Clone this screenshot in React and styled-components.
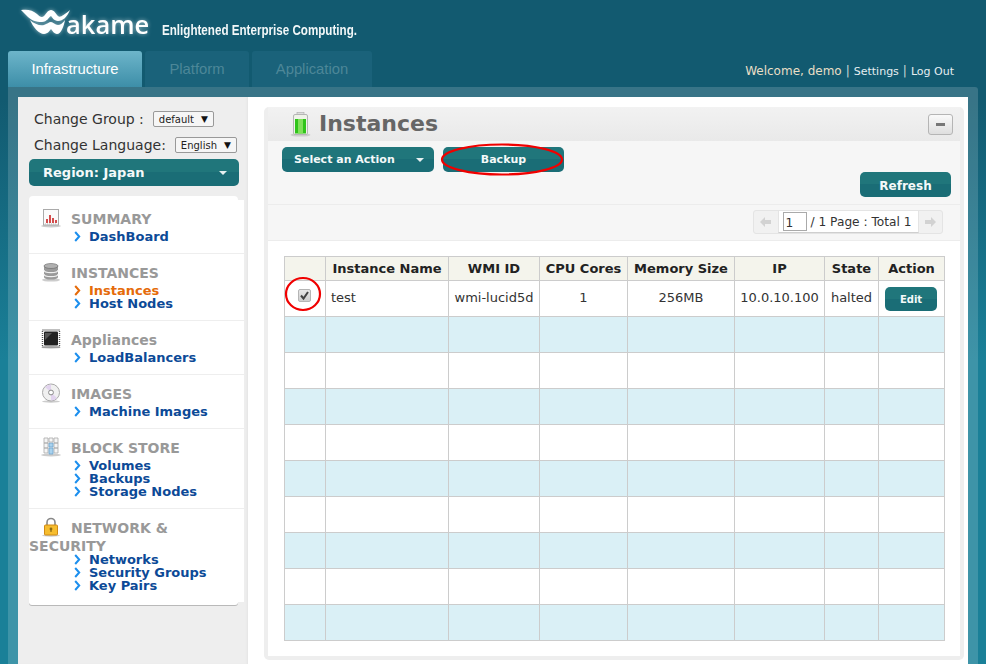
import React from 'react'
import styled, { createGlobalStyle } from 'styled-components'

const GlobalStyle = createGlobalStyle`
  html, body { margin: 0; padding: 0; }
  body {
    height: 664px;
    overflow: hidden;
    font-family: "DejaVu Sans", sans-serif;
    background: linear-gradient(#125a70 0, #125a70 100px, #1a8098 360px, #1a8098 100%);
  }
`

const Header = styled.header`
  height: 87px;
  position: relative;
  display: flex;
  flex-direction: column;
  justify-content: space-between;
`

const BrandName = styled.span`
  font-family: "Open Sans", sans-serif;
  font-weight: 600;
  font-size: 25.5px;
  line-height: 30px;
  margin: 0 0 0 -7px;
`

const Brand = styled.div`
  display: flex;
  align-items: flex-start;
  padding: 9px 0 0 21px;
  color: #fff;

  svg, ${BrandName} {
    filter: drop-shadow(0 0 2px rgba(255, 255, 255, .55));
  }
`

const Tagline = styled.span`
  font-family: "Liberation Sans", sans-serif;
  font-weight: 700;
  font-size: 14px;
  line-height: 16px;
  color: #f2f7f8;
  margin: 13px 0 0 13px;
  transform: scaleX(.83);
  transform-origin: left;
  white-space: nowrap;
`

const NavRow = styled.div`
  display: flex;
  align-items: flex-end;
  justify-content: space-between;
  padding: 0 32px 0 8px;
`

const Tabs = styled.nav`
  display: flex;
  gap: 3px;
`

const Tab = styled.a`
  width: ${p => p.$w}px;
  height: 36px;
  line-height: 36px;
  text-align: center;
  font-family: "Liberation Sans", sans-serif;
  font-size: 14.8px;
  border-radius: 3px 3px 0 0;
  color: ${p => p.$active ? '#fff' : '#4d8798'};
  background: ${p => p.$active ? 'linear-gradient(#6db5ca, #3d8ea8)' : '#1a627a'};
`

const UserNav = styled.div`
  padding-bottom: 9px;
  font-size: 12px;
  color: #e9dfc6;
  white-space: nowrap;
`

const UserLink = styled.span`
  font-size: 11px;
  color: #e6eef0;
`

const Sep = styled.span`
  margin: 0 4px;
  color: #cfd8d8;
`

const Shell = styled.div`
  margin: 0 8px;
  height: 577px;
  box-sizing: border-box;
  padding: 10px 10px 0;
  display: flex;
  border-radius: 0 3px 0 0;
  background: rgba(255, 255, 255, .16);
`

const Sidebar = styled.aside`
  width: 230px;
  flex: none;
  box-sizing: border-box;
  padding: 9px 0 0 11px;
  background: #eeeeee;
  box-shadow: inset -2px 0 2px -1px #e4e4e4;
`

const FieldRow = styled.div`
  height: 26px;
  display: flex;
  align-items: center;
  padding-left: 5px;
  font-size: 14px;
  color: #333;
  white-space: nowrap;
`

const FakeSelect = styled.span`
  box-sizing: border-box;
  width: ${p => p.$w}px;
  height: 16px;
  margin-left: ${p => p.$gap}px;
  padding: 0 5px;
  display: flex;
  align-items: center;
  justify-content: space-between;
  font-size: 10px;
  color: #222;
  background: #f6f6f6;
  border: 1px solid #999;
  border-radius: 2px;

  i {
    font-style: normal;
    font-size: 9px;
    color: #111;
  }
`

const Caret = styled.span`
  width: 0;
  height: 0;
  margin-right: -2px;
  border-left: 4px solid transparent;
  border-right: 4px solid transparent;
  border-top: 4px solid #e6f0f0;
`

const TealButton = styled.button`
  position: relative;
  box-sizing: border-box;
  width: ${p => p.$w}px;
  height: ${p => p.$h || 25}px;
  padding: 0 ${p => p.$pad || 0}px;
  display: flex;
  align-items: center;
  justify-content: ${p => p.$split ? 'space-between' : 'center'};
  font-family: "DejaVu Sans", sans-serif;
  font-weight: 700;
  font-size: ${p => p.$size || 11}px;
  color: #f4f9f9;
  border: 0;
  border-radius: 5px;
  background: linear-gradient(#20767b 0, #20767b 50%, #1a6d76 50%, #1a6d76 100%);
`

const RegionButton = styled(TealButton)`
  margin-top: 1px;
  white-space: nowrap;
`

const RefreshButton = styled(TealButton)`
  padding-top: 2px;
`

const Menu = styled.div`
  width: 215px;
  margin-top: 10px;
`

const MenuCap = styled.div`
  width: 209px;
  height: ${p => p.$bottom ? 3 : 4}px;
  background: #fff;
  border-radius: ${p => p.$bottom ? '0 0 5px 5px' : '5px 5px 0 0'};
  box-shadow: ${p => p.$bottom ? '0 1px 0 #b9b9b9' : 'none'};
`

const Section = styled.section`
  padding: 10px 0;
  background: #fff;
  border-top: ${p => p.$first ? 0 : 1}px solid #eeeeee;

  &::after {
    content: "";
    display: block;
    clear: both;
  }
`

const SectionIcon = styled.span`
  float: left;
  width: 42px;
  height: 18px;
  padding-left: 12px;
  box-sizing: border-box;

  svg {
    display: block;
    margin-top: -2px;
  }
`

const SectionTitle = styled.h3`
  margin: 0 0 ${p => p.$wrapped ? -2 : 2}px;
  font-size: 14px;
  line-height: 18px;
  font-weight: 700;
  color: #999;
`

const LinkRow = styled.a`
  display: flex;
  align-items: center;
  height: 13px;
  padding-left: 45px;
  font-size: 13px;
  line-height: 13px;
  font-weight: 700;
  color: ${p => p.$active ? '#e56b0a' : '#0c4a97'};

  svg {
    margin-right: 8px;
    flex: none;
  }
`

const Main = styled.main`
  flex: 1;
  min-width: 0;
  box-sizing: border-box;
  padding: 10px 4px 4px 16px;
  background: #fff;
`

const Panel = styled.div`
  height: 553px;
  box-sizing: border-box;
  padding: 0 4px 4px;
  background: #eeeeee;
  border-radius: 5px;
  display: flex;
  flex-direction: column;
`

const PanelHead = styled.div`
  height: 34px;
  flex: none;
  padding: 0 7px 0 22px;
  display: flex;
  align-items: center;
  background: linear-gradient(#f2f2f2, #e9e9e9);
`

const PanelTitle = styled.h2`
  flex: 1;
  margin: 0 0 0 8px;
  font-size: 22px;
  line-height: 32px;
  font-weight: 700;
  color: #666;
`

const Collapse = styled.button`
  width: 25px;
  height: 21px;
  padding: 0;
  display: flex;
  align-items: center;
  justify-content: center;
  background: linear-gradient(#fafafa, #dedede);
  border: 1px solid #b5b5b5;
  border-radius: 3px;

  &::before {
    content: "";
    width: 9px;
    height: 3px;
    background: #777;
  }
`

const Toolbar = styled.div`
  flex: none;
  padding: 6px 9px 7px 14px;
  background: #f6f6f6;
  border-bottom: 1px solid #ececec;
`

const ToolRow = styled.div`
  height: 25px;
  display: flex;
  gap: 9px;
  justify-content: ${p => p.$end ? 'flex-end' : 'flex-start'};
`

const Mark = styled.svg`
  position: absolute;
  left: ${p => p.$x}px;
  top: ${p => p.$y}px;
  pointer-events: none;
  overflow: visible;
`

const PagerBar = styled.div`
  height: 36px;
  flex: none;
  box-sizing: border-box;
  padding: 5px 17px 0 0;
  display: flex;
  justify-content: flex-end;
  background: #f6f6f6;
  border-bottom: 1px solid #ececec;
`

const Pager = styled.div`
  width: 190px;
  height: 24px;
  box-sizing: border-box;
  display: flex;
  align-items: stretch;
  background: #f1f1f1;
  border: 1px solid #e4e4e4;
  border-radius: 3px;
`

const PagerArrow = styled.span`
  flex: 1;
  display: flex;
  align-items: center;
  justify-content: center;
`

const PagerBody = styled.div`
  width: 141px;
  flex: none;
  box-sizing: border-box;
  display: flex;
  align-items: center;
  gap: 4px;
  padding-left: 4px;
  font-size: 12.2px;
  color: #333;
  white-space: nowrap;
  background: #fff;
  border-left: 1px solid #e4e4e4;
  border-right: 1px solid #e4e4e4;
  border-bottom: 1px solid #cfcfcf;
`

const PageInput = styled.span`
  box-sizing: border-box;
  width: 24px;
  height: 19px;
  line-height: 20px;
  padding-left: 2px;
  border: 1px solid #aaa;
  background: #fff;
`

const TableArea = styled.div`
  flex: 1;
  padding: 15px 16px;
  background: #fff;
`

const Grid = styled.table`
  width: 660px;
  table-layout: fixed;
  border-collapse: collapse;
  border: 1px solid #ccc;
  font-size: 13px;
  color: #333;
`

const Th = styled.th`
  box-sizing: border-box;
  width: ${p => p.$w}px;
  height: 24px;
  padding: 0;
  font-size: 13px;
  font-weight: 700;
  color: #222;
  white-space: nowrap;
  background: #f4f4ec;
  border: 1px solid #ccc;
`

const Tr = styled.tr`
  background: ${p => p.$alt ? '#daf0f6' : '#fff'};
`

const Td = styled.td`
  position: relative;
  height: 36px;
  padding: 0 ${p => p.$left ? 5 : 0}px 2px;
  text-align: ${p => p.$left ? 'left' : 'center'};
  white-space: nowrap;
  box-sizing: border-box;
  border: 1px solid #ccc;
`

const Check = styled.span`
  display: block;
  width: 11px;
  height: 11px;
  margin: -4px 0 0 13px;
  background: linear-gradient(#e8e8e8, #cfcfcf);
  border: 1px solid #b5b5b5;
  border-radius: 2px;

  svg {
    display: block;
  }
`

const EditButton = styled(TealButton)`
  margin: 3px 0 0 6px;
`

const ChartIcon = () => (
  <svg width="20" height="20" viewBox="0 0 20 20">
    <ellipse cx="10" cy="18" rx="10" ry="1.5" fill="#ccc" />
    <rect x="2.5" y="1.5" width="15" height="15.5" fill="#fbfbfb" stroke="#aaa" />
    <path d="M6 15V11M9 15V7M12 15V10M15 15V12" stroke="#cf3a3a" strokeWidth="1.8" />
    <path d="M4 16h12" stroke="#bbb" strokeDasharray="1 1" />
  </svg>
)

const DbIcon = () => (
  <svg width="20" height="20" viewBox="0 0 20 20">
    <ellipse cx="10" cy="18" rx="9" ry="1.6" fill="#ccc" />
    <path d="M3 4v11c0 1.5 3 2.6 7 2.6s7-1.1 7-2.6V4z" fill="#9a9a9a" />
    <ellipse cx="10" cy="4" rx="7" ry="2.5" fill="#b0b0b0" stroke="#666" strokeWidth=".6" />
    <path d="M3 8c0 1.5 3 2.6 7 2.6s7-1.1 7-2.6M3 12c0 1.5 3 2.6 7 2.6s7-1.1 7-2.6" fill="none" stroke="#efefef" strokeWidth="1.2" />
  </svg>
)

const ChipIcon = () => (
  <svg width="20" height="20" viewBox="0 0 20 20">
    <ellipse cx="10" cy="18.5" rx="10" ry="1.2" fill="#ccc" />
    <rect x="1.5" y="1" width="17" height="17" fill="none" stroke="#555" strokeDasharray="1 1" strokeWidth="1.4" />
    <rect x="3" y="2.5" width="14" height="14" rx="1" fill="#222" />
    <path d="M4 4h7l-7 7z" fill="#555" />
  </svg>
)

const DiscIcon = () => (
  <svg width="20" height="20" viewBox="0 0 20 20">
    <ellipse cx="10" cy="18.5" rx="9" ry="1.2" fill="#ccc" />
    <circle cx="10" cy="9.5" r="8.5" fill="#f0f0f0" stroke="#aaa" />
    <path d="M10 9.5L4 4a8 8 0 0 1 6-2.5zM10 9.5l6 5.5a8 8 0 0 1-6 2.5z" fill="#e2d4ee" />
    <circle cx="10" cy="9.5" r="2.4" fill="#fff" stroke="#888" />
  </svg>
)

const BlocksIcon = () => (
  <svg width="20" height="20" viewBox="0 0 20 20">
    <ellipse cx="10" cy="18" rx="10" ry="1.4" fill="#ccc" />
    <path d="M3 1h4v5H3zM3 6h4v5H3zM3 11h4v5H3zM13 1h4v5h-4zM13 6h4v5h-4zM13 11h4v5h-4z" fill="#f5f5f5" stroke="#aaa" strokeWidth=".8" />
    <path d="M8 6h4v4H8zM8 11h4v6H8z" fill="#a9d2ee" stroke="#6fa3cc" strokeWidth=".8" />
    <path d="M8 1h4v4H8z" fill="#f5f5f5" stroke="#aaa" strokeWidth=".8" />
  </svg>
)

const LockIcon = () => (
  <svg width="20" height="20" viewBox="0 0 20 20">
    <ellipse cx="10" cy="18.5" rx="9" ry="1.2" fill="#ccc" />
    <path d="M6 9V5.5a4 4 0 0 1 8 0V9" fill="none" stroke="#888" strokeWidth="1.6" />
    <rect x="3.5" y="8" width="13" height="10" rx="1" fill="#f6bd2f" stroke="#d08a15" />
    <circle cx="10" cy="12" r="1.4" fill="#8a6a15" />
    <path d="M10 12v3" stroke="#8a6a15" strokeWidth="1.2" />
  </svg>
)

const BatteryIcon = () => (
  <svg width="21" height="25" viewBox="0 0 21 25">
    <ellipse cx="10.5" cy="23" rx="10" ry="1.6" fill="#ccc" />
    <rect x="7" y="0.5" width="7" height="2.5" fill="#ddd" stroke="#aaa" strokeWidth=".6" />
    <rect x="3.5" y="2.5" width="14" height="20" rx="1.5" fill="#eef3e8" stroke="#b5b5b5" />
    <rect x="5" y="7" width="11" height="14.5" fill="#2fc41a" />
    <rect x="8" y="7" width="5" height="14.5" fill="#7fe05a" />
  </svg>
)

const WaveLogo = () => (
  <svg width="52" height="28" viewBox="0 0 52 28">
    <path
      d="M0 1C6 0 12 1 16 5C19 8 21 9 23 7C25 5 27 1 30 1C33 1 35 5 37 7C39 9 43 6 49 1C46 8 42 12 37 12C33 12 31 8 30 7C28 8 26 13 21 13C15 13 10 11 7 8zM9 11C13 15 19 17 23 16C26 15 28 13 30 13C32 13 34 16 37 16C39 16 42 14 44 11C43 17 40 25 36 25C33 25 31 21 30 20C29 21 27 25 23 25C18 25 12 18 9 11z"
      fill="#fff"
    />
  </svg>
)

const Chevron = ({ active }) => (
  <svg width="7" height="11" viewBox="0 0 7 11">
    <path d="M1.2 1l4 4.5-4 4.5" fill="none" stroke={active ? '#e56b0a' : '#1c8fee'} strokeWidth="2" />
  </svg>
)

const Arrow = ({ flip }) => (
  <svg width="11" height="10" viewBox="0 0 11 10">
    <path d={flip ? 'M11 5L6 0v3H0v4h6v3z' : 'M0 5l5-5v3h6v4H5v3z'} fill="#d2d2d2" />
  </svg>
)

const sections = [
  { title: 'SUMMARY', icon: <ChartIcon />, links: ['DashBoard'] },
  { title: 'INSTANCES', icon: <DbIcon />, links: ['Instances', 'Host Nodes'], active: 'Instances' },
  { title: 'Appliances', icon: <ChipIcon />, links: ['LoadBalancers'] },
  { title: 'IMAGES', icon: <DiscIcon />, links: ['Machine Images'] },
  { title: 'BLOCK STORE', icon: <BlocksIcon />, links: ['Volumes', 'Backups', 'Storage Nodes'] },
  { title: 'NETWORK & SECURITY', icon: <LockIcon />, links: ['Networks', 'Security Groups', 'Key Pairs'], wrapped: true },
]

const columns = [
  ['', 41], ['Instance Name', 123], ['WMI ID', 91], ['CPU Cores', 88],
  ['Memory Size', 107], ['IP', 90], ['State', 54], ['Action', 66],
]

const emptyRows = [1, 2, 3, 4, 5, 6, 7, 8, 9]

function App() {
  return (
    <>
      <GlobalStyle />
      <Header>
        <Brand>
          <WaveLogo />
          <BrandName>akame</BrandName>
          <Tagline>Enlightened Enterprise Computing.</Tagline>
        </Brand>
        <NavRow>
          <Tabs>
            <Tab $active $w={134}>Infrastructure</Tab>
            <Tab $w={104}>Platform</Tab>
            <Tab $w={120}>Application</Tab>
          </Tabs>
          <UserNav>
            Welcome, demo<Sep>|</Sep><UserLink>Settings</UserLink><Sep>|</Sep><UserLink>Log Out</UserLink>
          </UserNav>
        </NavRow>
      </Header>
      <Shell>
        <Sidebar>
          <FieldRow>
            Change Group :<FakeSelect $w={61} $gap={9}>default <i>▼</i></FakeSelect>
          </FieldRow>
          <FieldRow>
            Change Language:<FakeSelect $w={62} $gap={9}>English <i>▼</i></FakeSelect>
          </FieldRow>
          <RegionButton $w={210} $h={27} $pad={14} $size={13} $split>
            Region: Japan<Caret />
          </RegionButton>
          <Menu>
            <MenuCap />
            {sections.map((s, i) => (
              <Section key={s.title} $first={i === 0}>
                <SectionIcon>{s.icon}</SectionIcon>
                <SectionTitle $wrapped={s.wrapped}>{s.title}</SectionTitle>
                {s.links.map(l => (
                  <LinkRow key={l} $active={l === s.active}>
                    <Chevron active={l === s.active} />
                    {l}
                  </LinkRow>
                ))}
              </Section>
            ))}
            <MenuCap $bottom />
          </Menu>
        </Sidebar>
        <Main>
          <Panel>
            <PanelHead>
              <BatteryIcon />
              <PanelTitle>Instances</PanelTitle>
              <Collapse />
            </PanelHead>
            <Toolbar>
              <ToolRow>
                <TealButton $w={152} $pad={12} $split>
                  Select an Action<Caret />
                </TealButton>
                <TealButton $w={121}>
                  Backup
                  <Mark $x={-2} $y={-2} width="122" height="31" viewBox="0 0 122 31">
                    <ellipse cx="61" cy="14.5" rx="60" ry="15" fill="none" stroke="#f00000" strokeWidth="2.2" />
                  </Mark>
                </TealButton>
              </ToolRow>
              <ToolRow $end>
                <RefreshButton $w={91} $size={12}>Refresh</RefreshButton>
              </ToolRow>
            </Toolbar>
            <PagerBar>
              <Pager>
                <PagerArrow><Arrow /></PagerArrow>
                <PagerBody>
                  <PageInput>1</PageInput>
                  / 1 Page : Total 1
                </PagerBody>
                <PagerArrow><Arrow flip /></PagerArrow>
              </Pager>
            </PagerBar>
            <TableArea>
              <Grid>
                <thead>
                  <tr>
                    {columns.map(([label, w], i) => <Th key={i} $w={w}>{label}</Th>)}
                  </tr>
                </thead>
                <tbody>
                  <Tr>
                    <Td>
                      <Check>
                        <svg width="11" height="11" viewBox="0 0 11 11">
                          <path d="M2 5.5l2.5 3L9 2" fill="none" stroke="#444" strokeWidth="2" />
                        </svg>
                      </Check>
                      <Mark $x={0} $y={-4} width="36" height="34" viewBox="0 0 36 34">
                        <ellipse cx="18" cy="17" rx="17" ry="16" fill="none" stroke="#f00000" strokeWidth="2.2" />
                      </Mark>
                    </Td>
                    <Td $left>test</Td>
                    <Td>wmi-lucid5d</Td>
                    <Td>1</Td>
                    <Td>256MB</Td>
                    <Td>10.0.10.100</Td>
                    <Td>halted</Td>
                    <Td><EditButton $w={52} $h={24} $size={10}>Edit</EditButton></Td>
                  </Tr>
                  {emptyRows.map(n => (
                    <Tr key={n} $alt={n % 2 === 1}>
                      {columns.map((c, i) => <Td key={i} />)}
                    </Tr>
                  ))}
                </tbody>
              </Grid>
            </TableArea>
          </Panel>
        </Main>
      </Shell>
    </>
  )
}

export default App
